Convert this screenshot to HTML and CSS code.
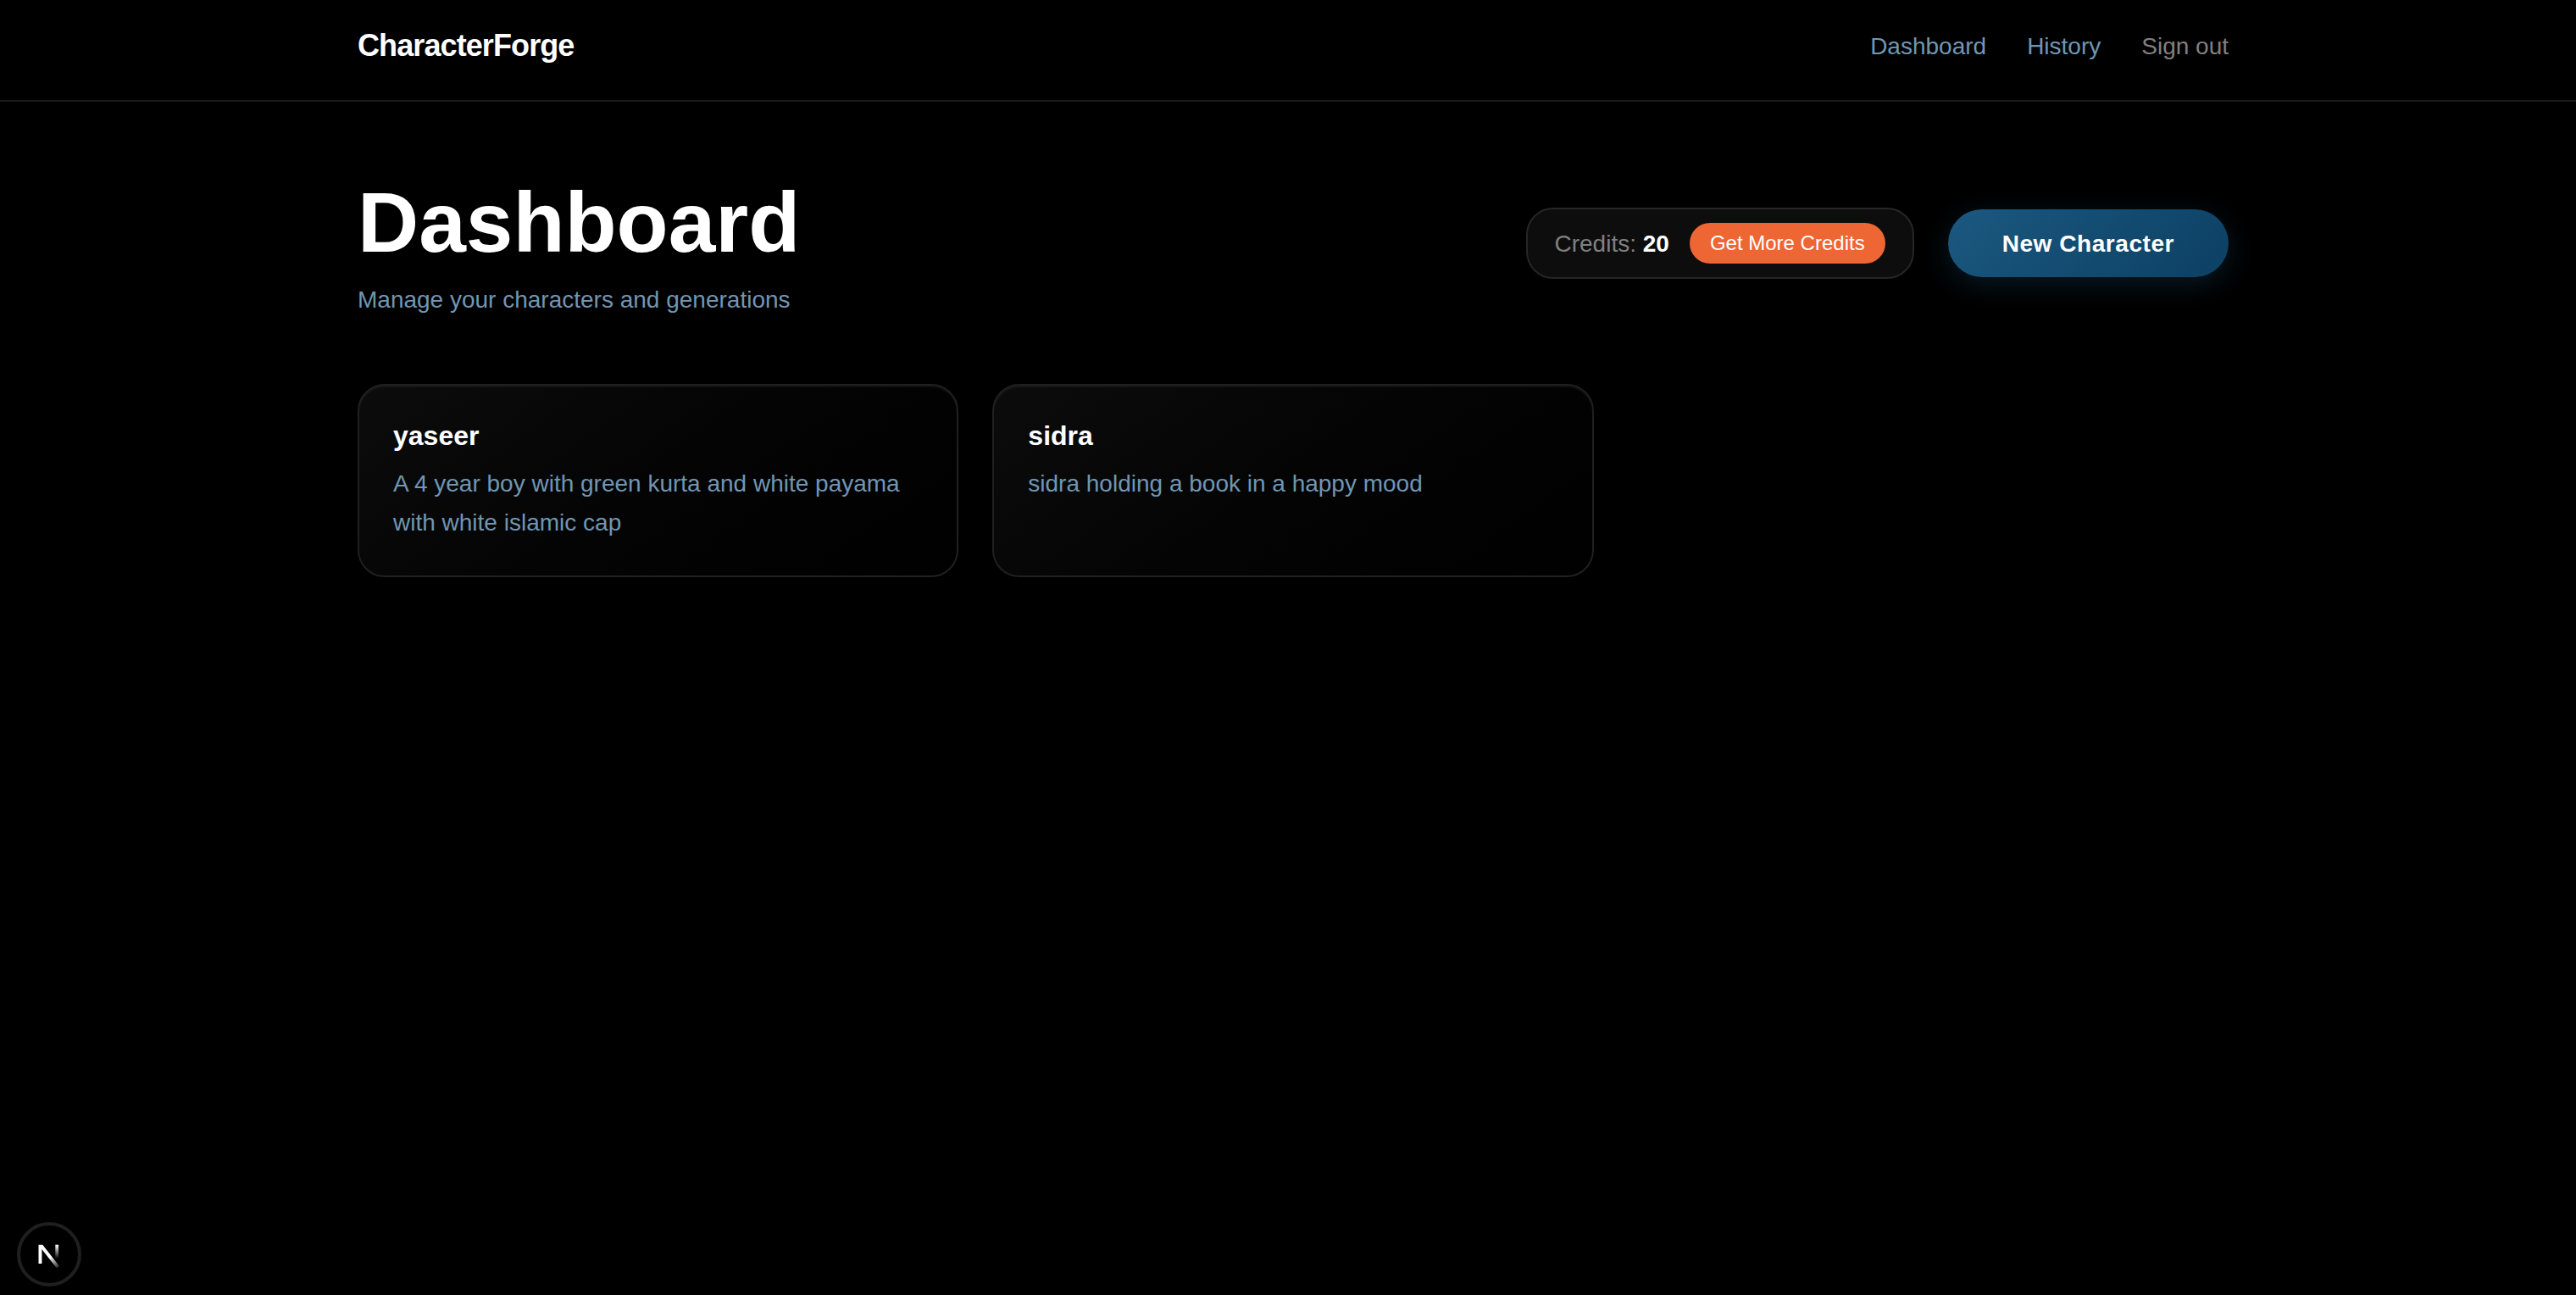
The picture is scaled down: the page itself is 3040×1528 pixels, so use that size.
FILE: index.html
```
<!DOCTYPE html>
<html lang="en">

<head>
    <meta charset="UTF-8">
    <meta name="viewport" content="width=device-width, initial-scale=1.0">
    <title>CharacterForge</title>
    <link rel="stylesheet" href="styles.css">
</head>

<body>
    <header class="navbar">
        <a href="#" class="brand">CharacterForge</a>
        <nav class="nav-links">
            <a href="#">Dashboard</a>
            <a href="#">History</a>
            <button class="sign-out">Sign out</button>
        </nav>
    </header>

    <main class="page">
        <div class="page-header">
            <div class="page-title">
                <h1>Dashboard</h1>
                <p>Manage your characters and generations</p>
            </div>
            <div class="actions">
                <div class="credits">
                    <span class="credits-label">Credits: <strong>20</strong></span>
                    <button class="credits-btn">Get More Credits</button>
                </div>
                <button class="new-btn">New Character</button>
            </div>
        </div>

        <div class="characters">
            <div class="card">
                <h3>yaseer</h3>
                <p>A 4 year boy with green kurta and white payama with white islamic cap</p>
            </div>
            <div class="card">
                <h3>sidra</h3>
                <p>sidra holding a book in a happy mood</p>
            </div>
        </div>
    </main>

    <!-- Dev tools badge -->
    <div class="dev-badge">
        <svg width="40" height="40" viewBox="0 0 40 40" fill="none">
            <defs>
                <linearGradient id="diag" x1="22" y1="23" x2="32" y2="38" gradientUnits="userSpaceOnUse">
                    <stop stop-color="#fff"/>
                    <stop offset="1" stop-color="#fff" stop-opacity="0"/>
                </linearGradient>
                <linearGradient id="stem" x1="29" y1="9" x2="29" y2="25" gradientUnits="userSpaceOnUse">
                    <stop stop-color="#fff"/>
                    <stop offset="1" stop-color="#fff" stop-opacity="0"/>
                </linearGradient>
            </defs>
            <path d="M7.5 8.7H12.3L32 34L29 36.5L11.4 14V31H7.5Z" fill="url(#diag)"/>
            <rect x="27.3" y="8.7" width="3.8" height="16" fill="url(#stem)"/>
        </svg>
    </div>
</body>

</html>
```
FILE: styles.css
```
* {
    box-sizing: border-box;
    margin: 0;
    padding: 0;
}

body {
    font-family: "Liberation Sans", Arial, Helvetica, sans-serif;
    font-size: 28px;
    background: #000;
    color: #fff;
    min-height: 100vh;
}

a {
    color: #7096b3;
    text-decoration: none;
}

button {
    font-family: inherit;
    border: none;
    cursor: pointer;
}

/* Navbar */
.navbar {
    display: flex;
    justify-content: space-between;
    align-items: center;
    height: 120px;
    padding: 0 410px 9px 422px;
    border-bottom: 2px solid #1a1a1a;
}

.brand {
    color: #fff;
    font-size: 36px;
    font-weight: bold;
    letter-spacing: -0.9px;
    padding-bottom: 2px;
}

.nav-links {
    display: flex;
    align-items: center;
    gap: 48px;
}

.sign-out {
    background: none;
    color: #808080;
    font-size: 28px;
}

/* Page */
.page {
    padding: 79px 410px 0 422px;
}

.page-header {
    display: flex;
    justify-content: space-between;
    align-items: center;
    margin-bottom: 78px;
}

.page-title h1 {
    font-size: 100px;
    line-height: 126px;
    margin-bottom: 8px;
}

.page-title p {
    color: #7096b3;
    line-height: 42px;
}

.actions {
    display: flex;
    align-items: center;
    gap: 40px;
}

.credits {
    display: flex;
    align-items: center;
    gap: 24px;
    height: 84px;
    padding: 0 32px;
    background: #0d0d0d;
    border: 2px solid #262626;
    border-radius: 32px;
}

.credits-label {
    color: #808080;
    padding-top: 1px;
}

.credits-label strong {
    color: #fff;
}

.credits-btn {
    height: 48px;
    padding: 0 24px;
    background: #ee6633;
    color: #fff;
    font-size: 24px;
    border-radius: 24px;
}

.new-btn {
    height: 80px;
    padding: 1px 64px 0;
    background: linear-gradient(135deg, #1b5880, #0c4063);
    color: #fff;
    font-size: 28px;
    font-weight: bold;
    letter-spacing: 0.56px;
    border-radius: 40px;
    box-shadow: 0 8px 32px rgba(27, 88, 128, 0.3);
}

/* Character cards */
.characters {
    display: grid;
    grid-template-columns: repeat(3, 1fr);
    gap: 40px;
}

.card {
    height: 228px;
    padding: 40px;
    background: linear-gradient(145deg, #0c0c0c, #040404 50%, #000);
    border: 2px solid #202020;
    border-radius: 32px;
    box-shadow: inset 0 2px 0 rgba(255, 255, 255, 0.05);
}

.card h3 {
    font-size: 32px;
    line-height: 38px;
    margin-bottom: 15px;
}

.card p {
    color: #7096b3;
    line-height: 46px;
}

.dev-badge {
    position: fixed;
    left: 20px;
    bottom: 10px;
    width: 76px;
    height: 76px;
    display: flex;
    align-items: center;
    justify-content: center;
    background: #000;
    border: 4px solid #1f1f1f;
    border-radius: 50%;
}
```
